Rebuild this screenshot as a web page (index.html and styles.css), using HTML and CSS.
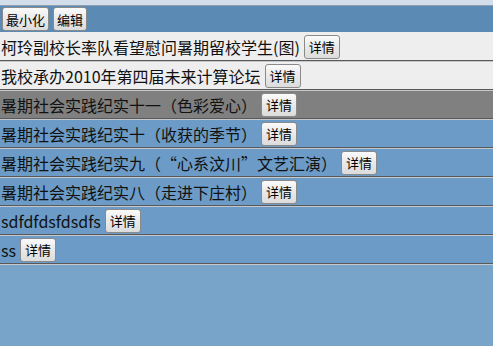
FILE: index.html
```html
<!DOCTYPE html>
<html lang="zh-CN">
<head>
  <meta charset="UTF-8" />
  <title>新闻列表</title>
  <link rel="stylesheet" href="styles.css">
</head>
<body>

  <div class="topbar"></div>

  <div class="toolbar">
    <button>最小化</button>
    <button>编辑</button>
  </div>

  <ul class="news-list">
    <li class="news light"><span>柯玲副校长率队看望慰问暑期留校学生(图)</span><button>详情</button></li>
    <li class="news light"><span>我校承办2010年第四届未来计算论坛</span><button>详情</button></li>
    <li class="news active"><span>暑期社会实践纪实十一（色彩爱心）</span><button>详情</button></li>
    <li class="news"><span>暑期社会实践纪实十（收获的季节）</span><button>详情</button></li>
    <li class="news"><span>暑期社会实践纪实九（“心系汶川”文艺汇演）</span><button>详情</button></li>
    <li class="news"><span>暑期社会实践纪实八（走进下庄村）</span><button>详情</button></li>
    <li class="news"><span>sdfdfdsfdsdfs</span><button>详情</button></li>
    <li class="news"><span>ss</span><button>详情</button></li>
  </ul>

</body>
</html>
```

FILE: styles.css
```css
* {
  margin: 0;
  padding: 0;
  box-sizing: border-box;
}
body {
  font-family: "Noto Sans CJK SC", "Noto Sans", sans-serif;
  background-color: #78a4ca;
  color: #111;
}
button {
  font-family: "Noto Sans CJK SC", sans-serif;
  font-size: 13px;
  line-height: 1;
  height: 24px;
  padding: 0 4px;
  color: #000;
  background: linear-gradient(#fafafa, #e9e9e9 50%, #dcdcdc);
  border: 1px solid #8a8a8a;
  border-radius: 3px;
}
.topbar {
  height: 6px;
  background-color: #d4deea;
  border-bottom: 1px solid #8e9fb4;
}
.toolbar {
  display: flex;
  align-items: center;
  gap: 4px;
  height: 26px;
  padding: 0 2px;
  background-color: #5b8ab4;
}
.toolbar button {
  padding: 0 3px;
}
.news-list {
  list-style: none;
  border-bottom: 1px solid #c4c8cc;
}
.news {
  display: flex;
  align-items: center;
  gap: 4px;
  height: 29px;
  padding-left: 1px;
  font-size: 16px;
  line-height: 20px;
  background-color: #6b9bc6;
  border-top: 1px solid #c4c8cc;
  border-bottom: 1px solid #595959;
}
.news:first-child {
  border-top-color: #eeeeee;
}
.news.light {
  background-color: #eeeeee;
}
.news.active {
  background-color: #808080;
}
.news span {
  white-space: nowrap;
  text-spacing-trim: space-all;
}
```
